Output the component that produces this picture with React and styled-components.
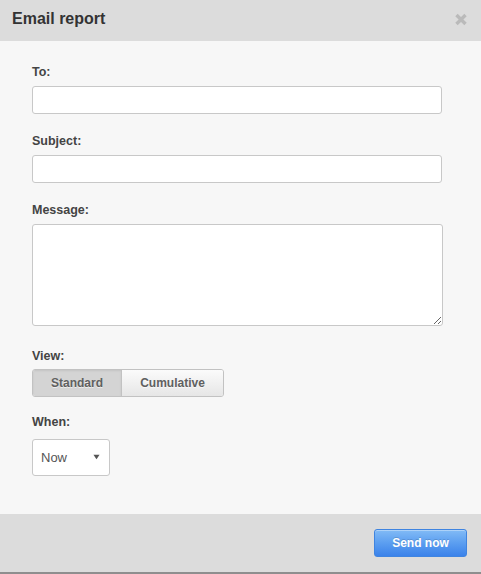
import React from "react"
import styled, { createGlobalStyle } from "styled-components"

const GlobalStyle = createGlobalStyle`
  html, body {
    margin: 0;
    padding: 0;
    background: #f7f7f7;
    font-family: "Liberation Sans", Arial, sans-serif;
  }
`

export default function App() {
  return (
    <>
      <GlobalStyle />
      <Dialog>
        <Header>
          <Title>Email report</Title>
          <CloseIcon viewBox="0 0 12 13" aria-label="Close">
            <path d="M1.5 2 L10.5 11 M10.5 2 L1.5 11" />
          </CloseIcon>
        </Header>

        <Body>
          <Field $after={19}>
            <Label>To:</Label>
            <TextInput type="text" />
          </Field>

          <Field $after={19}>
            <Label>Subject:</Label>
            <TextInput type="text" />
          </Field>

          <Field $after={22}>
            <Label>Message:</Label>
            <TextArea />
          </Field>

          <Field $after={17}>
            <Label $mb={5}>View:</Label>
            <Segmented>
              <Segment $active>Standard</Segment>
              <Segment>Cumulative</Segment>
            </Segmented>
          </Field>

          <Field>
            <Label $mb={9}>When:</Label>
            <SelectBox>
              <span>Now</span>
              <Caret viewBox="0 0 8 6">
                <path d="M0.5 0.5 H7.5 L4 5.5 Z" />
              </Caret>
            </SelectBox>
          </Field>
        </Body>

        <Footer>
          <SendButton>Send now</SendButton>
        </Footer>
      </Dialog>
    </>
  )
}

const Dialog = styled.div`
  height: 100vh;
  display: flex;
  flex-direction: column;
`

const Header = styled.header`
  height: 41px;
  box-sizing: border-box;
  padding: 10px 14px 0 12px;
  display: flex;
  justify-content: space-between;
  align-items: flex-start;
  background: #dcdcdc;
`

const Title = styled.h2`
  margin: 0;
  font-size: 16px;
  line-height: 18px;
  font-weight: 700;
  color: #333;
`

const CloseIcon = styled.svg`
  width: 12px;
  height: 13px;
  margin-top: 3px;
  fill: none;
  stroke: #bababa;
  stroke-width: 3.4;
`

const Body = styled.main`
  flex: 1;
  padding: 23px 32px 0;
  background: #f7f7f7;
`

const Field = styled.div`
  margin-bottom: ${(p) => p.$after || 0}px;
`

const Label = styled.label`
  display: block;
  margin-bottom: ${(p) => (p.$mb === undefined ? 6 : p.$mb)}px;
  font-size: 12.5px;
  line-height: 16px;
  font-weight: 700;
  color: #444;
`

const TextInput = styled.input`
  display: block;
  box-sizing: border-box;
  width: 410px;
  height: 28px;
  margin: 0;
  padding: 4px 8px;
  border: 1px solid #c8c8c8;
  border-radius: 3px;
  background: #fff;
  font: 13px "Liberation Sans", Arial, sans-serif;
  outline: none;
`

const TextArea = styled.textarea`
  display: block;
  box-sizing: border-box;
  width: 411px;
  height: 102px;
  margin: 0;
  padding: 6px 8px;
  border: 1px solid #c8c8c8;
  border-radius: 3px;
  background: #fff;
  font: 13px "Liberation Sans", Arial, sans-serif;
  outline: none;
`

const Segmented = styled.div`
  display: inline-flex;
  height: 28px;
  box-sizing: border-box;
  border: 1px solid #c2c2c2;
  border-radius: 3px;
  overflow: hidden;
`

const Segment = styled.button`
  height: 100%;
  margin: 0;
  padding: 0;
  width: ${(p) => (p.$active ? 88 : 102)}px;
  border: none;
  border-left: ${(p) => (p.$active ? "none" : "1px solid #c2c2c2")};
  background: ${(p) =>
    p.$active
      ? "#d4d4d4"
      : "linear-gradient(to bottom, #fbfbfb 0%, #e6e6e6 100%)"};
  box-shadow: ${(p) => (p.$active ? "inset 0 1px 2px rgba(0,0,0,0.08)" : "none")};
  font-family: "Liberation Sans", Arial, sans-serif;
  font-size: 12px;
  font-weight: 700;
  color: #606060;
  text-shadow: 0 1px 0 rgba(255, 255, 255, 0.6);
  cursor: pointer;
`

const SelectBox = styled.div`
  width: 78px;
  height: 37px;
  box-sizing: border-box;
  padding: 0 9px 0 8px;
  display: flex;
  align-items: center;
  justify-content: space-between;
  border: 1px solid #c8c8c8;
  border-radius: 3px;
  background: #fff;
  font-size: 13px;
  color: #555;
`

const Caret = styled.svg`
  width: 7px;
  height: 6px;
  margin-top: -2px;
  fill: #555;
`

const Footer = styled.footer`
  height: 58px;
  padding-right: 14px;
  display: flex;
  justify-content: flex-end;
  align-items: center;
  background: #dcdcdc;
  border-bottom: 2px solid #8e8e8e;
`

const SendButton = styled.button`
  width: 93px;
  height: 28px;
  margin: 0;
  padding: 0;
  border: 1px solid #3f84e0;
  border-radius: 3px;
  background: linear-gradient(to bottom, #82bbf6 0%, #5b9ef0 50%, #3b82ea 100%);
  box-shadow: inset 0 1px 0 rgba(255, 255, 255, 0.35);
  font-family: "Liberation Sans", Arial, sans-serif;
  font-size: 12px;
  font-weight: 700;
  color: #fff;
  text-shadow: 0 -1px 0 rgba(0, 0, 0, 0.15);
  cursor: pointer;
`
